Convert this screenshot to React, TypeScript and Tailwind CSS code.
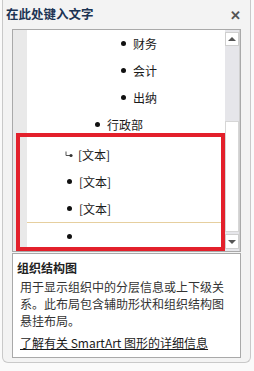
import React from "react";

const font = { fontFamily: '"Noto Sans CJK SC", "Noto Sans", sans-serif' };

function Bullet() {
  return <span className="inline-block w-[5px] h-[5px] rounded-full bg-[#111] shrink-0" />;
}

function Hook() {
  return (
    <svg width="8" height="7" viewBox="0 0 8 7" className="shrink-0">
      <path d="M1 0.5 V4.5 H5" stroke="#555" strokeWidth="1" fill="none" />
      <circle cx="6" cy="4.5" r="1.6" fill="#333" />
    </svg>
  );
}

function Row({ pad, label, hook, h = "h-[27px]", line }: { pad: string; label?: string; hook?: boolean; h?: string; line?: boolean }) {
  return (
    <div className={`flex items-center ${h} ${pad} ${line ? "border-t border-[#e6cf9f]" : ""}`}>
      {hook ? <Hook /> : <Bullet />}
      {label && <span className={`${hook ? "ml-[5px]" : "ml-[7px]"} text-[12px] leading-none text-[#1a1a1a]`}>{label}</span>}
    </div>
  );
}

export default function App() {
  return (
    <div className="w-[254px] h-[371px] bg-[#fafafa] overflow-hidden" style={font}>
      <div className="ml-[2px] w-[249px] h-[363px] bg-[#f3f3f3] border border-t-0 border-[#c9c9c9] rounded-b-[6px] relative">
        {/* header */}
        <div className="h-[29px] flex items-center justify-between pl-[3px] pr-[9px]">
          <span className="text-[12.5px] font-bold text-[#1c3453]">在此处键入文字</span>
          <span className="text-[13px] font-bold text-[#555] leading-none">✕</span>
        </div>

        {/* text pane */}
        <div className="ml-[9px] w-[229px] h-[223px] border border-[#a9a9a9] bg-white flex">
          <div className="w-[14px] bg-[#e9e9e9]" />
          <div className="flex-1 flex flex-col">
            <Row pad="pl-[94px]" label="财务" />
            <Row pad="pl-[94px]" label="会计" />
            <Row pad="pl-[94px]" label="出纳" />
            <Row pad="pl-[68px]" label="行政部" />
            <div className="mt-[3px]">
              <Row pad="pl-[38px]" label="[文本]" hook />
              <Row pad="pl-[40px]" label="[文本]" />
              <Row pad="pl-[40px]" label="[文本]" />
              <Row pad="pl-[40px]" h="h-[28px]" line />
            </div>
          </div>
          <div className="w-[15px] bg-[#e6e6ea] flex flex-col items-center pt-[2px] pb-[2px] border-r border-[#d0d0d0]">
            <div className="w-[14px] h-[14px] bg-white border border-[#cfcfcf] flex items-center justify-center">
              <span className="w-0 h-0 border-l-[4px] border-r-[4px] border-b-[4px] border-l-transparent border-r-transparent border-b-[#555]" />
            </div>
            <div className="w-[14px] h-[111px] mt-[75px] bg-white border border-[#d6d6d6]" />
            <div className="w-[14px] h-[15px] mt-auto bg-white border border-[#cfcfcf] flex items-center justify-center">
              <span className="w-0 h-0 border-l-[4px] border-r-[4px] border-t-[4px] border-l-transparent border-r-transparent border-t-[#555]" />
            </div>
          </div>
        </div>

        {/* description */}
        <div className="ml-[9px] mt-[1px] w-[229px] h-[105px] border border-[#a9a9a9] bg-white pt-[5px] text-[12px] text-[#333]">
          <div className="pl-[4px] font-bold leading-[17px] text-[#222]">组织结构图</div>
          <div className="pl-[7px] mt-[2px] leading-[17px] whitespace-nowrap">
            用于显示组织中的分层信息或上下级关<br />
            系。此布局包含辅助形状和组织结构图<br />
            悬挂布局。
          </div>
          <div className="pl-[7px] mt-[5px] leading-[17px] underline text-[#1a1a1a] whitespace-nowrap">了解有关 SmartArt 图形的详细信息</div>
        </div>

        {/* annotation */}
        <div className="absolute left-[13px] top-[133px] w-[209px] h-[118px] border-[4px] border-[#e3202b]" />
      </div>
    </div>
  );
}
